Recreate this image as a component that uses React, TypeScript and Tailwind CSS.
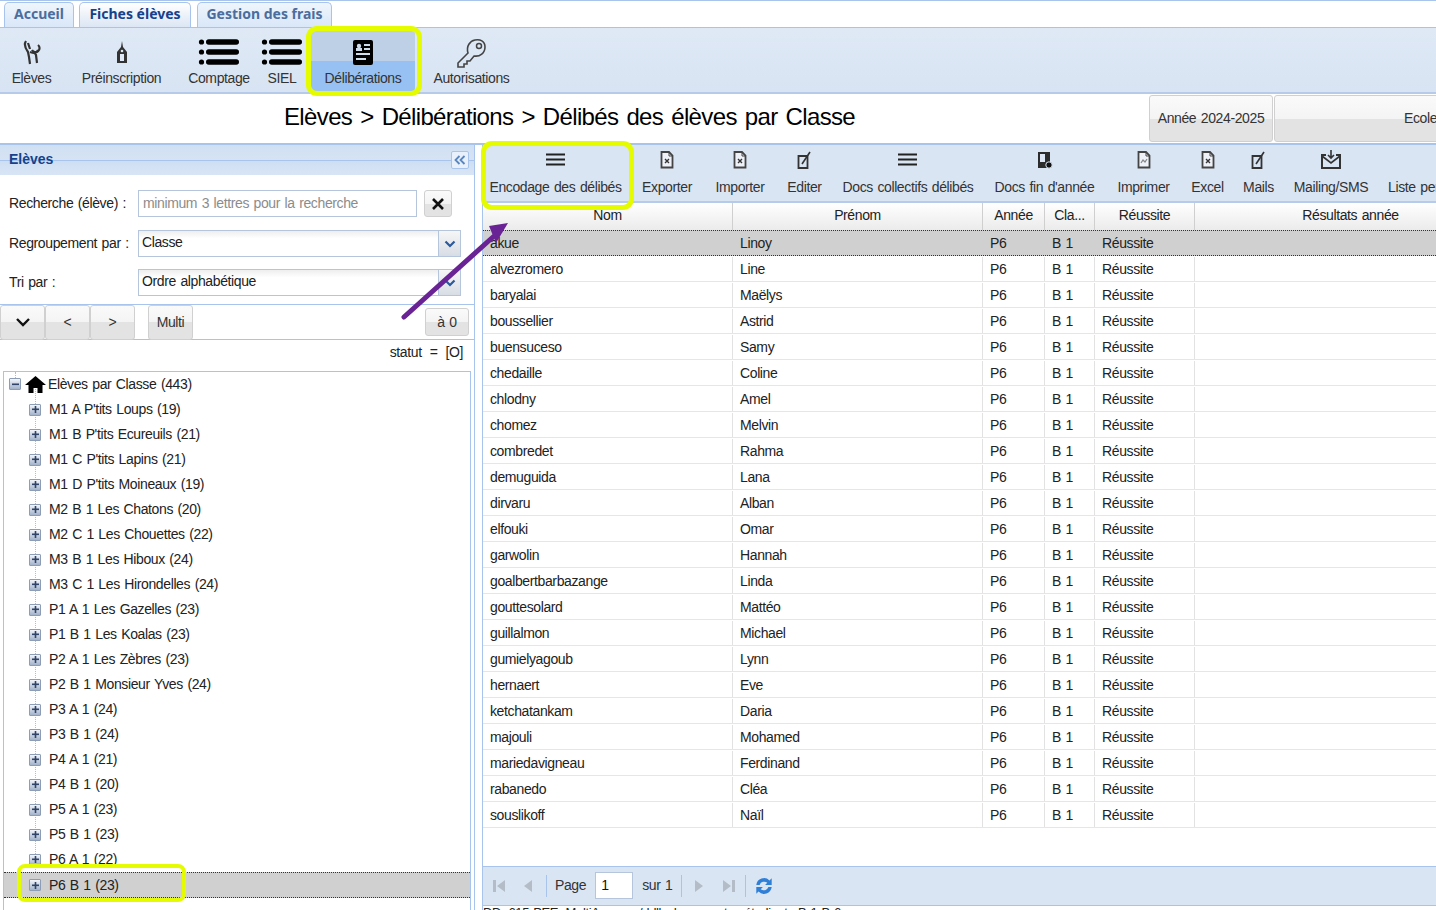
import React from "react";

const font = { fontFamily: '"Liberation Sans", Arial, sans-serif' };

const rows: [string, string][] = [
  ["akue", "Linoy"], ["alvezromero", "Line"], ["baryalai", "Maëlys"], ["boussellier", "Astrid"], ["buensuceso", "Samy"],
  ["chedaille", "Coline"], ["chlodny", "Amel"], ["chomez", "Melvin"], ["combredet", "Rahma"], ["demuguida", "Lana"],
  ["dirvaru", "Alban"], ["elfouki", "Omar"], ["garwolin", "Hannah"], ["goalbertbarbazange", "Linda"], ["gouttesolard", "Mattéo"],
  ["guillalmon", "Michael"], ["gumielyagoub", "Lynn"], ["hernaert", "Eve"], ["ketchatankam", "Daria"], ["majouli", "Mohamed"],
  ["mariedavigneau", "Ferdinand"], ["rabanedo", "Cléa"], ["souslikoff", "Naïl"],
];

const tree = [
  "M1 A P'tits Loups (19)", "M1 B P'tits Ecureuils (21)", "M1 C P'tits Lapins (21)", "M1 D P'tits Moineaux (19)",
  "M2 B 1 Les Chatons (20)", "M2 C 1 Les Chouettes (22)", "M3 B 1 Les Hiboux (24)", "M3 C 1 Les Hirondelles (24)",
  "P1 A 1 Les Gazelles (23)", "P1 B 1 Les Koalas (23)", "P2 A 1 Les Zèbres (23)", "P2 B 1 Monsieur Yves (24)",
  "P3 A 1 (24)", "P3 B 1 (24)", "P4 A 1 (21)", "P4 B 1 (20)", "P5 A 1 (23)", "P5 B 1 (23)", "P6 A 1 (22)",
];

function ListIcon({ w = 42, h = 26 }: { w?: number; h?: number }) {
  return (
    <svg width={w} height={h} viewBox="0 0 42 26">
      {[3, 13, 23].map((y) => (
        <g key={y}>
          <circle cx="3.5" cy={y} r="2.6" fill="#000" />
          <rect x="8" y={y - 2.8} width="33" height="5.6" rx="2.8" fill="#000" />
        </g>
      ))}
    </svg>
  );
}

function Burger() {
  return (
    <svg width="20" height="14" viewBox="0 0 20 14">
      <rect y="0.5" width="19" height="2" fill="#222" />
      <rect y="5.5" width="19" height="2" fill="#222" />
      <rect y="10.5" width="19" height="2" fill="#222" />
    </svg>
  );
}

function DocIcon({ mark = "x" }: { mark?: string }) {
  return (
    <svg width="14" height="18" viewBox="0 0 14 18">
      <path d="M1.5 1h7.5l3.5 3.5v12h-11z" fill="#eef2f8" stroke="#444" strokeWidth="1.8" />
      <path d="M9 1v4h3.5" fill="none" stroke="#444" strokeWidth="1" />
      {mark === "x" ? (
        <path d="M5 8l4 4M9 8l-4 4" stroke="#333" strokeWidth="1.4" />
      ) : (
        <path d="M4 12l2-3 2 2 2-3" fill="none" stroke="#888" strokeWidth="1.3" />
      )}
    </svg>
  );
}

function EditIcon() {
  return (
    <svg width="15" height="19" viewBox="0 0 15 19">
      <path d="M1.5 5h9v12h-9z" fill="none" stroke="#333" strokeWidth="1.8" />
      <path d="M5 13l8-12" stroke="#333" strokeWidth="1.6" />
    </svg>
  );
}

function DocsFinIcon() {
  return (
    <svg width="16" height="18" viewBox="0 0 16 18">
      <path d="M1 1h12v16H1z" fill="#2c2c2c" />
      <rect x="3" y="3" width="5" height="8" fill="#dce6f4" />
      <circle cx="12" cy="14" r="3.2" fill="#111" stroke="#dce6f4" />
    </svg>
  );
}

function MailIcon() {
  return (
    <svg width="22" height="20" viewBox="0 0 22 20">
      <path d="M6 5H2v13h18V5h-4" fill="none" stroke="#333" strokeWidth="2" />
      <path d="M2 6l9 7 9-7" fill="none" stroke="#333" strokeWidth="1.6" />
      <path d="M11 0v8M8 5l3 3 3-3" fill="none" stroke="#333" strokeWidth="1.6" />
    </svg>
  );
}

function Plus({ minus = false }: { minus?: boolean }) {
  return (
    <span className="relative flex h-[12px] w-[12px] shrink-0 items-center justify-center rounded-[1px] border border-[#8d9db5] bg-gradient-to-b from-[#f3f6fb] to-[#a3b2ca]">
      <svg width="7" height="7" viewBox="0 0 7 7">
        <rect y="2.5" width="7" height="1.6" fill="#2f4468" />
        {!minus && <rect x="2.7" width="1.6" height="7" fill="#2f4468" />}
      </svg>
    </span>
  );
}

function Tab({ label, active = false, w }: { label: string; active?: boolean; w: string }) {
  return (
    <div
      style={{ fontFamily: '"Noto Sans", sans-serif' }}
      className={`flex h-[25px] items-center justify-center rounded-t-[5px] border border-b-0 border-[#a9c4ec] pb-[3px] text-[14px] font-bold tracking-normal [word-spacing:0px] ${w} ${
        active ? "bg-gradient-to-b from-white to-[#dce6f4] text-[#15428b]" : "bg-gradient-to-b from-[#eff5fc] to-[#d9e7f8] text-[#4b6d9e]"
      }`}
    >
      {label}
    </div>
  );
}

function RibbonItem({ label, w, children, active = false }: { label: string; w: string; children: React.ReactNode; active?: boolean }) {
  return (
    <div className={`flex h-[60px] flex-col items-center text-[14px] text-[#333] ${w} ${active ? "rounded-[3px] bg-[linear-gradient(#bed0e6_0,#bed0e6_50%,#96c1f2_50%,#96c1f2_100%)]" : ""}`}>
      <div className="flex h-[36px] items-center justify-center pt-[6px]">{children}</div>
      <div className="mt-[1px] whitespace-nowrap leading-5">{label}</div>
    </div>
  );
}

function ToolItem({ label, w, children }: { label: string; w: string; children: React.ReactNode }) {
  return (
    <div className={`flex shrink-0 flex-col items-center text-[14px] text-[#333] ${w}`}>
      <div className="flex h-[24px] items-center justify-center">{children}</div>
      <div className="mt-[5px] whitespace-nowrap leading-5">{label}</div>
    </div>
  );
}

function GreyBtn({ children, w, h = "h-[35px]" }: { children: React.ReactNode; w: string; h?: string }) {
  return (
    <div className={`flex shrink-0 items-center justify-center rounded-[3px] border border-[#d0d0d0] bg-[linear-gradient(#fafafa_0,#f4f4f4_50%,#e3e3e3_50%,#e3e3e3_100%)] text-[14px] text-[#333] ${w} ${h}`}>
      {children}
    </div>
  );
}

function Combo({ value }: { value: string }) {
  return (
    <div className="flex h-[27px] w-[323px] items-stretch border border-[#b5c5dc] bg-gradient-to-b from-[#eee] to-white to-30% text-[14px] text-[#222]">
      <div className="flex-1 pl-[3px] leading-[23px]">{value}</div>
      <div className="flex w-[22px] items-center justify-center border-l border-[#b5c5dc] bg-gradient-to-b from-[#f6f6f6] to-[#d8dde5]">
        <svg width="12" height="8" viewBox="0 0 12 8"><path d="M1.5 1.5L6 6l4.500-4.500" fill="none" stroke="#2a5a9c" strokeWidth="2.2" /></svg>
      </div>
    </div>
  );
}

const cols = ["w-[250px]", "w-[250px]", "w-[62px]", "w-[50px]", "w-[100px]", "w-[312px]"];

export default function App() {
  return (
    <div className="relative h-[910px] w-[1436px] overflow-hidden bg-white tracking-[-0.38px] [word-spacing:1px]" style={font}>
      {/* Tabs */}
      <div className="flex h-[27px] items-end gap-[5px] border-t border-[#a9c4ec] pl-[4px]">
        <Tab label="Accueil" w="w-[70px]" />
        <Tab label="Fiches élèves" active w="w-[112px]" />
        <div className="ml-[1px]"><Tab label="Gestion des frais" w="w-[135px]" /></div>
      </div>

      {/* Ribbon */}
      <div className="flex h-[67px] items-start border-y-2 border-t-[#a9c4ec] border-b-[#b5cbe9] bg-gradient-to-b from-[#dfe9f6] to-[#d8e4f3] pl-[12px] pt-[3px] border-t-[1px]">
        <RibbonItem label="Elèves" w="w-[39px]">
          <svg width="20" height="26" viewBox="0 0 20 26">
            <path d="M4 2C2 5 3 9 6 13l1 5 1 7M15 24l-1-8-2-3" fill="none" stroke="#333" strokeWidth="2.200" />
            <path d="M6 4l2 6M16 6a4 4 0 1 1-6 5" fill="none" stroke="#333" strokeWidth="2.200" />
            <path d="M8 13c3 1 6 2 8-2" fill="none" stroke="#333" strokeWidth="2" />
          </svg>
        </RibbonItem>
        <div className="w-[30px]" />
        <RibbonItem label="Préinscription" w="w-[81px]">
          <svg width="12" height="24" viewBox="0 0 12 24">
            <path d="M6 1l1 6 4 5v11H1V12l4-5z" fill="#333" />
            <rect x="4" y="14" width="4" height="7" fill="#dfe9f6" />
            <circle cx="6" cy="11" r="1.300" fill="#dfe9f6" />
          </svg>
        </RibbonItem>
        <div className="w-[26px]" />
        <RibbonItem label="Comptage" w="w-[62px]"><ListIcon /></RibbonItem>
        <div className="w-[18px]" />
        <RibbonItem label="SIEL" w="w-[28px]"><ListIcon /></RibbonItem>
        <div className="w-[15px]" />
        <RibbonItem label="Délibérations" w="w-[104px]" active>
          <svg width="20" height="25" viewBox="0 0 20 25">
            <rect width="20" height="25" rx="2" fill="#000" />
            <circle cx="6" cy="6" r="2.200" fill="#cfdcec" />
            <rect x="3" y="8" width="6" height="3" fill="#cfdcec" />
            <rect x="11" y="4" width="6" height="2" fill="#cfdcec" />
            <rect x="11" y="8" width="6" height="2" fill="#cfdcec" />
            <rect x="3" y="13" width="14" height="2" fill="#cfdcec" />
            <rect x="3" y="18" width="10" height="2" fill="#cfdcec" />
          </svg>
        </RibbonItem>
        <div className="w-[17px]" />
        <RibbonItem label="Autorisations" w="w-[79px]">
          <svg width="32" height="31" viewBox="0 0 32 31">
            <path d="M12 16L2 26v4h6v-3h3v-3h3l4-5c6 1 11-3 11-9S24 2 19 3s-9 6-7 13z" fill="none" stroke="#444" strokeWidth="1.600" />
            <circle cx="23" cy="9" r="2.500" fill="none" stroke="#444" strokeWidth="1.500" />
          </svg>
        </RibbonItem>
      </div>

      {/* Title row */}
      <div className="flex h-[49px] items-center overflow-hidden">
        <div className="w-[1149px] shrink-0 pb-[3px] pl-[284px] text-[24px] leading-none tracking-[-0.64px] text-black [word-spacing:2px]">
          <span className="whitespace-nowrap">Elèves &gt; Délibérations &gt; Délibés des élèves par Classe</span>
        </div>
        <div className="flex h-[47px] shrink-0 gap-[1px]">
          <GreyBtn w="w-[124px]" h="h-[47px]">Année 2024-2025</GreyBtn>
          <GreyBtn w="w-[170px]" h="h-[47px]"><span className="w-full pl-[129px] whitespace-nowrap">Ecole</span></GreyBtn>
        </div>
      </div>

      {/* Main */}
      <div className="flex h-[767px] border-t-2 border-[#a9c4ec]">
        {/* Left panel */}
        <div className="flex w-[475px] shrink-0 flex-col border-r border-[#a9c4ec]">
          <div className="flex h-[30px] items-center justify-between bg-[linear-gradient(#d0e0f3_0,#d6e3f4_50%,#a9c4ec_50%,#a9c4ec_55%,#cfdff3_55%,#d8e5f6_100%)] pl-[9px] pr-[5px]">
            <span className="pb-[2px] text-[14px] font-bold tracking-normal text-[#15428b]">Elèves</span>
            <span className="flex h-[18px] w-[18px] items-center justify-center rounded-[2px] border border-[#a9c4ec] bg-[#e8f0fb]">
              <svg width="12" height="10" viewBox="0 0 12 10"><path d="M5.500 1L1.500 5l4 4M10.500 1l-4 4 4 4" fill="none" stroke="#5a86c0" strokeWidth="1.800" /></svg>
            </span>
          </div>
          <div className="flex flex-col pl-[9px] pt-[15px] text-[14px] text-[#222]">
            <div className="flex h-[27px] items-center">
              <span className="w-[129px] shrink-0 whitespace-nowrap">Recherche (élève) :</span>
              <div className="flex h-[27px] w-[279px] items-center border border-[#b5c5dc] pl-[4px] text-[#8c8c8c]">minimum 3 lettres pour la recherche</div>
              <GreyBtn w="w-[28px] ml-[7px]" h="h-[27px]">
                <svg width="14" height="14" viewBox="0 0 14 14"><path d="M2 2l10 10M12 2L2 12" stroke="#111" strokeWidth="2.600" /></svg>
              </GreyBtn>
            </div>
            <div className="mt-[13px] flex h-[27px] items-center">
              <span className="w-[129px] shrink-0 whitespace-nowrap">Regroupement par :</span>
              <Combo value="Classe" />
            </div>
            <div className="mt-[12px] flex h-[27px] items-center">
              <span className="w-[129px] shrink-0">Tri par :</span>
              <Combo value="Ordre alphabétique" />
            </div>
          </div>
          <div className="mt-[8px] flex h-[36px] items-center border-y border-[#a9c4ec]">
            <GreyBtn w="w-[45px]">
              <svg width="16" height="10" viewBox="0 0 16 10"><path d="M2 2l6 6 6-6" fill="none" stroke="#111" strokeWidth="2.400" /></svg>
            </GreyBtn>
            <GreyBtn w="w-[45px]">&lt;</GreyBtn>
            <GreyBtn w="w-[45px]">&gt;</GreyBtn>
            <GreyBtn w="w-[45px] ml-[13px]">Multi</GreyBtn>
            <GreyBtn w="w-[44px] ml-auto mr-[5px]" h="h-[28px]">à 0</GreyBtn>
          </div>
          <div className="pr-[11px] pt-[1px] text-right text-[14px] leading-[22px] text-[#222] [word-spacing:4.5px]">statut = [O]</div>
          <div className="relative mx-[3px] mt-[8px] flex-1 overflow-hidden border border-b-0 border-[#a9c4ec] pt-[1px]">
            <div className="absolute left-[11px] top-0 h-[8px] border-l border-dotted border-[#bbb]" />
            <div className="absolute bottom-[30px] left-[31px] top-[14px] border-l border-dotted border-[#bbb]" />
            <div className="relative flex h-[24px] items-center gap-[4px] pb-[2px] pl-[5px] text-[14px] text-[#222]">
              <Plus minus />
              <svg width="21" height="17" viewBox="0 0 21 17"><path d="M10.500 0L0 9h3.500v8h5v-5h4v5h5V9H21z" fill="#000" /></svg>
              <span className="ml-[-2px]">Elèves par Classe (443)</span>
            </div>
            {tree.map((t) => (
              <div key={t} className="relative flex h-[25px] items-center gap-[8px] pl-[25px] text-[14px] text-[#222]">
                <Plus />
                <span className="whitespace-nowrap">{t}</span>
              </div>
            ))}
            <div className="relative flex h-[26px] items-center gap-[8px] border-y border-dotted border-[#333] bg-[#d0d0d0] pl-[25px] text-[14px] text-[#222]">
              <Plus />
              <span>P6 B 1 (23)</span>
            </div>
          </div>
        </div>

        {/* Right panel */}
        <div className="ml-[7px] flex min-w-0 flex-1 flex-col border-l border-[#a9c4ec]">
          <div className="flex h-[58px] items-start gap-[20px] border-b-2 border-[#b5cbe9] bg-[#dae5f3] pl-[7px] pt-[3px]">
            <ToolItem label="Encodage des délibés" w="w-[131px]"><Burger /></ToolItem>
            <ToolItem label="Exporter" w="w-[52px]"><DocIcon /></ToolItem>
            <ToolItem label="Importer" w="w-[54px]"><DocIcon /></ToolItem>
            <ToolItem label="Editer" w="w-[35px]"><EditIcon /></ToolItem>
            <ToolItem label="Docs collectifs délibés" w="w-[132px]"><Burger /></ToolItem>
            <ToolItem label="Docs fin d'année" w="w-[101px]"><DocsFinIcon /></ToolItem>
            <ToolItem label="Imprimer" w="w-[57px]"><DocIcon mark="p" /></ToolItem>
            <ToolItem label="Excel" w="w-[31px]"><DocIcon /></ToolItem>
            <ToolItem label="Mails" w="w-[31px]"><EditIcon /></ToolItem>
            <ToolItem label="Mailing/SMS" w="w-[74px]"><MailIcon /></ToolItem>
            <ToolItem label="Liste pers" w="w-[58px]"><span /></ToolItem>
          </div>
          <div className="flex h-[27px] shrink-0 bg-gradient-to-b from-white to-[#ebebeb] text-[14px] text-[#222]">
            {["Nom", "Prénom", "Année", "Cla...", "Réussite", "Résultats année"].map((h, i) => (
              <div key={h} className={`flex shrink-0 items-center justify-center border-r border-[#cfcfcf] pb-[2px] ${cols[i]}`}>{h}</div>
            ))}
          </div>
          <div className="flex-1 overflow-hidden text-[14px] text-[#222]">
            {rows.map(([n, p], i) => (
              <div key={n} className={`flex h-[26px] ${i === 0 ? "border-y border-dotted border-[#333] bg-[#d0d0d0]" : "border-b border-[#e6e6e6] pt-[1px]"}`}>
                {[n, p, "P6", "B 1", "Réussite", ""].map((c, j) => (
                  <div key={j} className={`flex shrink-0 items-center border-r pl-[7px] ${i === 0 ? "border-transparent" : "border-[#e2e2e2]"} ${cols[j]}`}>{c}</div>
                ))}
              </div>
            ))}
          </div>
          <div className="flex h-[39px] shrink-0 items-center border-t border-[#a9c4ec] bg-[#dae5f3] pb-[1px] pl-[8px] text-[14px] text-[#333]">
            <svg width="16" height="16" viewBox="0 0 16 16"><path d="M2 2h3v12H2zM14 2v12L6 8z" fill="#b4bcc8" /></svg>
            <svg className="ml-[15px]" width="12" height="16" viewBox="0 0 12 16"><path d="M10 2v12L2 8z" fill="#b4bcc8" /></svg>
            <div className="ml-[12px] h-[22px] w-px bg-[#a9c4ec]" />
            <span className="ml-[8px]">Page</span>
            <div className="ml-[9px] flex h-[27px] w-[38px] items-center border border-[#b5c5dc] bg-white pl-[5px] text-[#111]">1</div>
            <span className="ml-[9px]">sur 1</span>
            <div className="ml-[9px] h-[22px] w-px bg-[#a9c4ec]" />
            <svg className="ml-[11px]" width="12" height="16" viewBox="0 0 12 16"><path d="M2 2v12l8-6z" fill="#b4bcc8" /></svg>
            <svg className="ml-[16px]" width="16" height="16" viewBox="0 0 16 16"><path d="M2 2v12l8-6zM11 2h3v12h-3z" fill="#b4bcc8" /></svg>
            <div className="ml-[8px] h-[22px] w-px bg-[#a9c4ec]" />
            <svg className="ml-[7px]" width="22" height="22" viewBox="0 0 20 20">
              <path d="M3 9a7 7 0 0 1 12-4l2-2v6h-6l2-2a4.500 4.500 0 0 0-7 2z" fill="#2f7fd6" />
              <path d="M17 11a7 7 0 0 1-12 4l-2 2v-6h6l-2 2a4.500 4.500 0 0 0 7-2z" fill="#2f7fd6" />
            </svg>
          </div>
          <div className="h-[5px] shrink-0 overflow-hidden border-t border-[#a9c4ec] text-[13px] leading-[14px] text-[#222]">
            <span className="whitespace-nowrap">DD: 615 PEE: MultiAnnexes/ddlb des comptes étudiants B 1 B 6</span>
          </div>
        </div>
      </div>

      {/* Annotations */}
      <div className="absolute left-[306px] top-[26px] h-[70px] w-[116px] rounded-[11px] border-[5px] border-[#e5fb00]" />
      <div className="absolute left-[481px] top-[141px] h-[69px] w-[153px] rounded-[11px] border-[5px] border-[#e5fb00]" />
      <div className="absolute left-[17px] top-[864px] h-[38px] w-[169px] rounded-[8px] border-[4px] border-[#e5fb00]" />
      <svg className="absolute left-[395px] top-[218px]" width="120" height="105" viewBox="0 0 120 105">
        <path d="M9 99L98 19" stroke="#6a2394" strokeWidth="5" strokeLinecap="round" />
        <path d="M113 5L94 8L101 25z" fill="#6a2394" />
      </svg>
    </div>
  );
}
